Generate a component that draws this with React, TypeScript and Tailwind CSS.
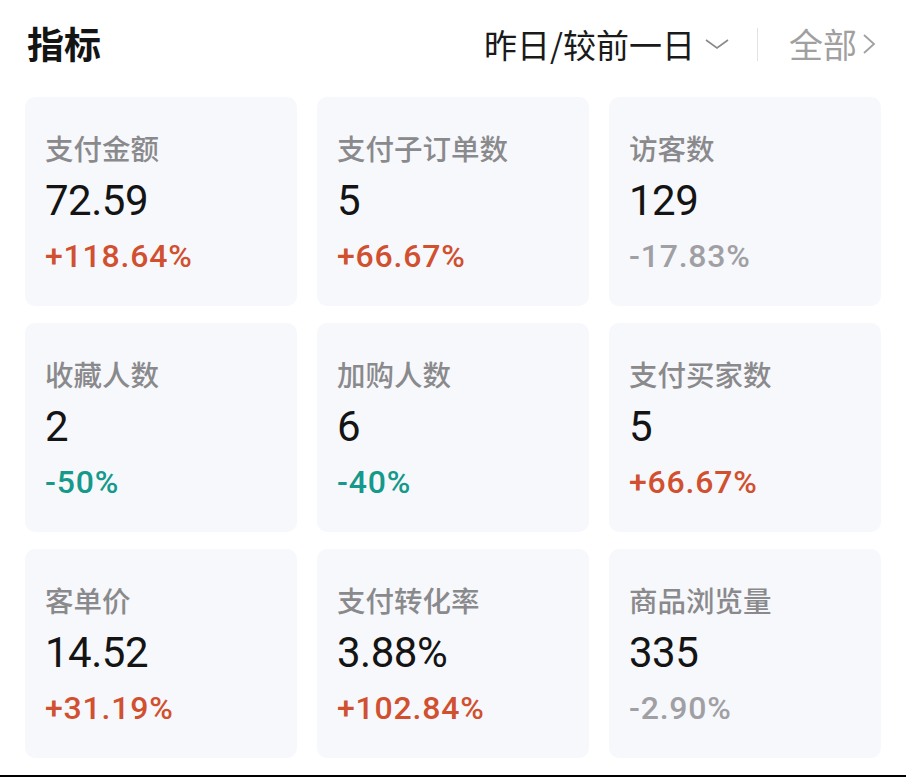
import React from "react";

type Item = { label: string; value: string; change: string; tone: "up" | "down" | "flat" };

const items: Item[] = [
  { label: "支付金额", value: "72.59", change: "+118.64%", tone: "up" },
  { label: "支付子订单数", value: "5", change: "+66.67%", tone: "up" },
  { label: "访客数", value: "129", change: "-17.83%", tone: "flat" },
  { label: "收藏人数", value: "2", change: "-50%", tone: "down" },
  { label: "加购人数", value: "6", change: "-40%", tone: "down" },
  { label: "支付买家数", value: "5", change: "+66.67%", tone: "up" },
  { label: "客单价", value: "14.52", change: "+31.19%", tone: "up" },
  { label: "支付转化率", value: "3.88%", change: "+102.84%", tone: "up" },
  { label: "商品浏览量", value: "335", change: "-2.90%", tone: "flat" },
];

const cjk = { fontFamily: '"Noto Sans CJK SC", "Noto Sans", sans-serif' };
const num = { fontFamily: 'Roboto, "Noto Sans CJK SC", sans-serif' };

function toneClass(t: Item["tone"]) {
  if (t === "up") return "text-[#d0502f]";
  if (t === "down") return "text-[#15998a]";
  return "text-[#a0a0a4]";
}

function Card({ item }: { item: Item }) {
  return (
    <div className="flex h-[209px] flex-col rounded-[10px] bg-[#f7f8fc] pl-5 pt-[31px]">
      <div className="text-[28.5px] font-medium leading-[40px] text-[#8a8a8c]" style={cjk}>
        {item.label}
      </div>
      <div className="mt-2 text-[42px] leading-[50px] tracking-[-0.5px] text-[#141414]" style={num}>
        {item.value}
      </div>
      <div className={`mt-[10px] text-[32px] font-medium leading-[40px] tracking-[0.8px] ${toneClass(item.tone)}`} style={num}>
        {item.change}
      </div>
    </div>
  );
}

export default function App() {
  return (
    <div className="flex h-[777px] w-[906px] flex-col bg-white">
      <div className="flex h-[88px] items-center justify-between pl-[27px] pr-[30px]">
        <div className="text-[37px] font-bold text-[#141414]" style={cjk}>
          指标
        </div>
        <div className="flex items-center">
          <span className="text-[33px] leading-[44px] text-[#1a1a1a]" style={cjk}>
            昨日/较前一日
          </span>
          <svg className="ml-[10px]" width="24" height="12" viewBox="0 0 24 12">
            <path d="M1 2 L12 10 L23 2" fill="none" stroke="#8a8a8a" strokeWidth="1.6" />
          </svg>
          <div className="ml-[28px] h-[33px] w-px bg-[#e2e2e2]" />
          <span className="ml-[31px] text-[34px] leading-[44px] text-[#a0a0a0]" style={cjk}>
            全部
          </span>
          <svg className="ml-[5px]" width="14" height="20" viewBox="0 0 14 20">
            <path d="M2 1 L12 10 L2 19" fill="none" stroke="#a0a0a0" strokeWidth="1.8" />
          </svg>
        </div>
      </div>
      <div className="mt-[9px] grid grid-cols-3 gap-x-5 gap-y-[17px] pl-[25px] pr-[25px]">
        {items.map((it) => (
          <Card key={it.label} item={it} />
        ))}
      </div>
      <div className="flex-1" />
      <div className="h-[2px] bg-black" />
    </div>
  );
}
